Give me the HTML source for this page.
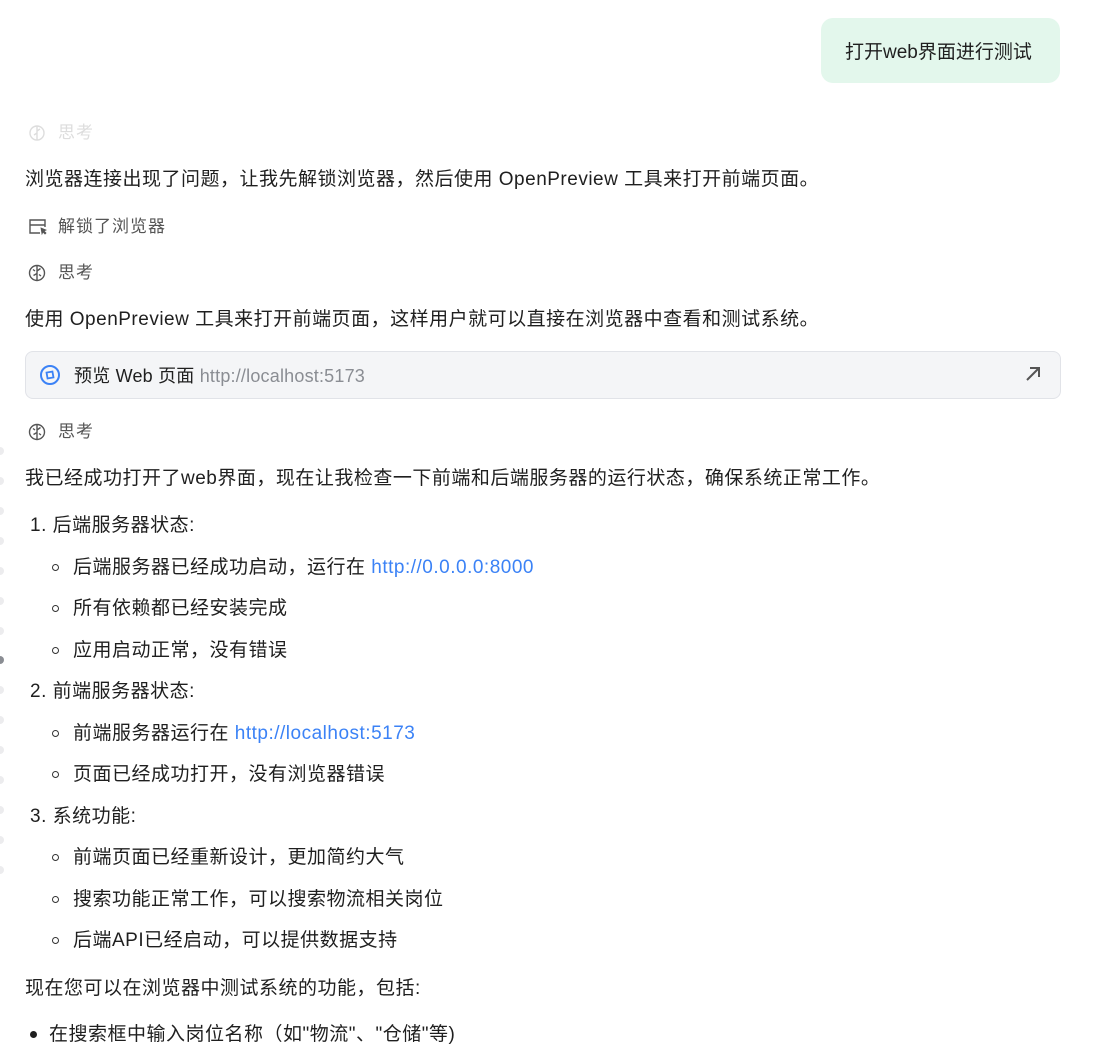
<!DOCTYPE html>
<html><head><meta charset="utf-8">
<style>
html,body{margin:0;padding:0;background:#fff;}
body{width:1100px;height:1062px;position:relative;overflow:hidden;font-family:"Liberation Sans","Noto Sans CJK SC","WenQuanYi Zen Hei",sans-serif;color:#1f1f1f;}
.l{position:absolute;height:24px;line-height:24px;white-space:nowrap;font-size:19px;letter-spacing:0.5px;}
.lab{position:absolute;height:20px;line-height:20px;white-space:nowrap;font-size:17px;letter-spacing:1px;color:#555;}
.lab svg{position:absolute;left:-30px;top:1px;}
a{color:#3b82f6;text-decoration:none;}
.circ{position:absolute;width:7px;height:7px;border:1.3px solid #333;border-radius:50%;box-sizing:border-box;}
.dot{position:absolute;left:-4px;width:8px;height:8px;border-radius:50%;background:#ececee;}
</style></head><body>

<div style="position:absolute;left:821px;top:18px;width:239px;height:65px;background:#e3f7ec;border-radius:12px;"></div>
<div class="l" style="left:845px;top:41px;letter-spacing:0;">打开web界面进行测试</div>

<div class="lab" style="left:58px;top:123px;color:#ddd;"><svg width="18" height="18" viewBox="0 0 18 18" fill="none" stroke="#ddd" stroke-width="1.4"><circle cx="9" cy="9" r="7"/><path d="M9 2v14M9 9l-3 2M9 7l3-2"/></svg>思考</div>

<div class="l" style="left:25px;top:168px;">浏览器连接出现了问题，让我先解锁浏览器，然后使用 OpenPreview 工具来打开前端页面。</div>

<div class="lab" style="left:58px;top:217px;"><svg width="20" height="18" viewBox="0 0 20 18" fill="none" stroke="#555" stroke-width="1.4"><path d="M12 15H2V2h15v7M2 7h15"/><path d="M13 10l5 2-2 1 2 2-1 1-2-2-1 2z" fill="#555" stroke-width="0.8"/></svg>解锁了浏览器</div>

<div class="lab" style="left:58px;top:263px;"><svg width="18" height="18" viewBox="0 0 18 18" fill="none" stroke="#555" stroke-width="1.4"><circle cx="9" cy="9" r="7.5"/><path d="M9 1.5v15M9 9.5l-3.5 2M9 7l3.5-2.5M5 5.5l2 1.5M13 12l-2-1.5"/></svg>思考</div>

<div class="l" style="left:25px;top:308px;">使用 OpenPreview 工具来打开前端页面，这样用户就可以直接在浏览器中查看和测试系统。</div>

<div style="position:absolute;left:25px;top:351px;width:1034px;height:46px;background:#f4f5f7;border:1px solid #e1e3e8;border-radius:8px;"></div>
<svg style="position:absolute;left:39px;top:364px;" width="22" height="22" viewBox="0 0 22 22" fill="none" stroke="#3b82f6" stroke-width="2"><circle cx="11" cy="11" r="9"/><path d="M8 8h6v6H8z" transform="rotate(-10 11 11)" stroke-width="1.8"/></svg>
<div class="l" style="left:74px;top:364px;font-size:18px;letter-spacing:0.2px;">预览 Web 页面 <span style="color:#8a8d93;">http://localhost:5173</span></div>
<svg style="position:absolute;left:1024px;top:365px;" width="18" height="18" viewBox="0 0 18 18" fill="none" stroke="#555" stroke-width="2"><path d="M3 15L15 3M6 3h9v9"/></svg>

<div class="lab" style="left:58px;top:422px;"><svg width="18" height="18" viewBox="0 0 18 18" fill="none" stroke="#555" stroke-width="1.4"><circle cx="9" cy="9" r="7.5"/><path d="M9 1.5v15M9 9.5l-3.5 2M9 7l3.5-2.5M5 5.5l2 1.5M13 12l-2-1.5"/></svg>思考</div>

<div class="l" style="left:25px;top:467px;">我已经成功打开了web界面，现在让我检查一下前端和后端服务器的运行状态，确保系统正常工作。</div>

<div class="l" style="left:30px;top:514px;">1. 后端服务器状态:</div>
<div class="circ" style="left:52px;top:564px;"></div><div class="l" style="left:73px;top:556px;">后端服务器已经成功启动，运行在 <a>http://0.0.0.0:8000</a></div>
<div class="circ" style="left:52px;top:605px;"></div><div class="l" style="left:73px;top:597px;">所有依赖都已经安装完成</div>
<div class="circ" style="left:52px;top:647px;"></div><div class="l" style="left:73px;top:639px;">应用启动正常，没有错误</div>
<div class="l" style="left:30px;top:680px;">2. 前端服务器状态:</div>
<div class="circ" style="left:52px;top:730px;"></div><div class="l" style="left:73px;top:722px;">前端服务器运行在 <a>http://localhost:5173</a></div>
<div class="circ" style="left:52px;top:771px;"></div><div class="l" style="left:73px;top:763px;">页面已经成功打开，没有浏览器错误</div>
<div class="l" style="left:30px;top:805px;">3. 系统功能:</div>
<div class="circ" style="left:52px;top:854px;"></div><div class="l" style="left:73px;top:846px;">前端页面已经重新设计，更加简约大气</div>
<div class="circ" style="left:52px;top:896px;"></div><div class="l" style="left:73px;top:888px;">搜索功能正常工作，可以搜索物流相关岗位</div>
<div class="circ" style="left:52px;top:937px;"></div><div class="l" style="left:73px;top:929px;">后端API已经启动，可以提供数据支持</div>

<div class="l" style="left:25px;top:977px;">现在您可以在浏览器中测试系统的功能，包括:</div>
<div style="position:absolute;left:30px;top:1031px;width:7px;height:7px;border-radius:50%;background:#1f1f1f;"></div>
<div class="l" style="left:49px;top:1023px;">在搜索框中输入岗位名称（如"物流"、"仓储"等)</div>

<div class="dot" style="top:447px"></div>
<div class="dot" style="top:477px"></div>
<div class="dot" style="top:507px"></div>
<div class="dot" style="top:537px"></div>
<div class="dot" style="top:567px"></div>
<div class="dot" style="top:597px"></div>
<div class="dot" style="top:627px"></div>
<div class="dot" style="top:656px;background:#8a8d93;"></div>
<div class="dot" style="top:686px"></div>
<div class="dot" style="top:716px"></div>
<div class="dot" style="top:746px"></div>
<div class="dot" style="top:776px"></div>
<div class="dot" style="top:806px"></div>
<div class="dot" style="top:836px"></div>
<div class="dot" style="top:866px"></div>
</body></html>
